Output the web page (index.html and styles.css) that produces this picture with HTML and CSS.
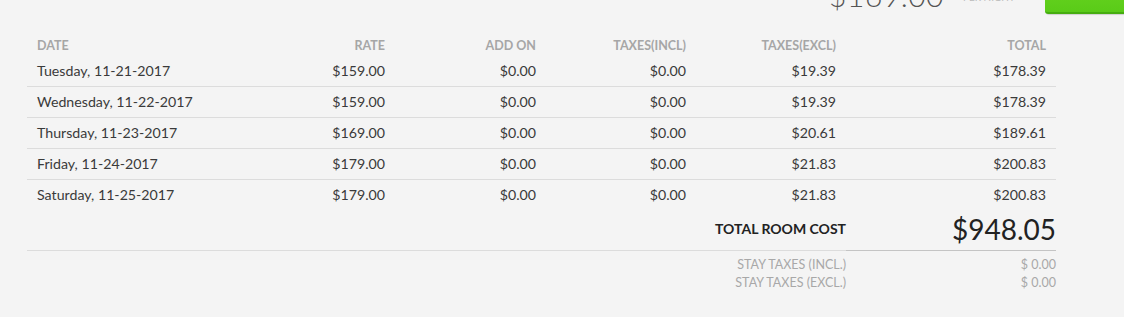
FILE: index.html
```html
<!DOCTYPE html>
<html>
<head>
<meta charset="utf-8">
<link rel="stylesheet" href="styles.css">
</head>
<body>
<div class="page">
  <div class="topbar">
    <div class="night-price">$169.00</div>
    <div class="per-night">PER NIGHT</div>
    <div class="book-btn"></div>
  </div>
  <table class="rates">
    <colgroup>
      <col class="c-date"><col class="c-mid"><col class="c-mid2"><col class="c-mid"><col class="c-mid"><col class="c-total">
    </colgroup>
    <thead>
      <tr><th class="l">DATE</th><th>RATE</th><th>ADD ON</th><th>TAXES(INCL)</th><th>TAXES(EXCL)</th><th>TOTAL</th></tr>
    </thead>
    <tbody>
      <tr><td class="l">Tuesday, 11-21-2017</td><td>$159.00</td><td>$0.00</td><td>$0.00</td><td>$19.39</td><td>$178.39</td></tr>
      <tr><td class="l">Wednesday, 11-22-2017</td><td>$159.00</td><td>$0.00</td><td>$0.00</td><td>$19.39</td><td>$178.39</td></tr>
      <tr><td class="l">Thursday, 11-23-2017</td><td>$169.00</td><td>$0.00</td><td>$0.00</td><td>$20.61</td><td>$189.61</td></tr>
      <tr><td class="l">Friday, 11-24-2017</td><td>$179.00</td><td>$0.00</td><td>$0.00</td><td>$21.83</td><td>$200.83</td></tr>
      <tr><td class="l">Saturday, 11-25-2017</td><td>$179.00</td><td>$0.00</td><td>$0.00</td><td>$21.83</td><td>$200.83</td></tr>
    </tbody>
  </table>
  <div class="summary">
    <div class="sum-row total-row">
      <div class="sum-label">TOTAL ROOM COST</div>
      <div class="sum-value">$948.05</div>
    </div>
    <div class="taxes">
      <div class="sum-row tax-row">
        <div class="sum-label">STAY TAXES (INCL.)</div>
        <div class="sum-value">$ 0.00</div>
      </div>
      <div class="sum-row tax-row">
        <div class="sum-label">STAY TAXES (EXCL.)</div>
        <div class="sum-value">$ 0.00</div>
      </div>
    </div>
  </div>
</div>
</body>
</html>
```

FILE: styles.css
```css
html, body {
  margin: 0;
  padding: 0;
  background: #f4f4f4;
}
body {
  font-family: Lato, "Open Sans", sans-serif;
  color: #333;
  overflow: hidden;
}
.page {
  width: 1124px;
}
.topbar {
  display: flex;
  justify-content: flex-end;
  align-items: flex-start;
  height: 55px;
  margin-top: -20px;
}
.night-price {
  font-size: 30px;
  font-weight: 300;
  line-height: 30px;
  color: #555;
  margin-top: 0px;
  letter-spacing: 0.5px;
}
.per-night {
  font-size: 10px;
  line-height: 12px;
  color: #bbb;
  margin-left: 19px;
  margin-top: 11px;
  width: 82px;
}
.book-btn {
  width: 79px;
  height: 32px;
  background: linear-gradient(#6ad522, #5acb18);
  border-bottom: 2px solid #46ad10;
  border-radius: 0 0 0 3px;
  box-shadow: 1px 1px 1px rgba(0,0,0,0.15);
}
.rates {
  margin-left: 27px;
  width: 1029px;
  table-layout: fixed;
  border-collapse: collapse;
  border-spacing: 0;
}
.c-date { width: 218px; }
.c-mid { width: 150px; }
.c-mid2 { width: 151px; }
.c-total { width: 210px; }
.rates th {
  font-size: 12.5px;
  font-weight: 700;
  color: #a6a6a6;
  line-height: 15px;
  padding: 3px 10px;
  text-align: right;
}
.rates td {
  font-size: 14.2px;
  line-height: 20px;
  padding: 5px 10px;
  text-align: right;
  color: #3a3a3a;
  white-space: nowrap;
}
.rates .l { text-align: left; }
.rates tbody tr + tr td {
  border-top: 1px solid #dcdcdc;
}
.summary {
  margin-left: 27px;
  width: 1029px;
}
.sum-row {
  display: flex;
  align-items: center;
}
.sum-label {
  flex: 1;
  text-align: right;
}
.sum-value {
  width: 210px;
  text-align: right;
}
.total-row {
  height: 40px;
}
.total-row .sum-label {
  font-size: 14px;
  font-weight: 700;
  color: #222;
  height: 40px;
  line-height: 38px;
  border-bottom: 1px solid #dcdcdc;
}
.total-row .sum-value {
  font-size: 28px;
  color: #222;
  height: 40px;
  line-height: 38px;
  border-bottom: 1px solid #c4c4c4;
}
.taxes {
  padding-top: 6px;
}
.tax-row {
  font-size: 12.5px;
  line-height: 18px;
  color: #a8a8a8;
}
```
